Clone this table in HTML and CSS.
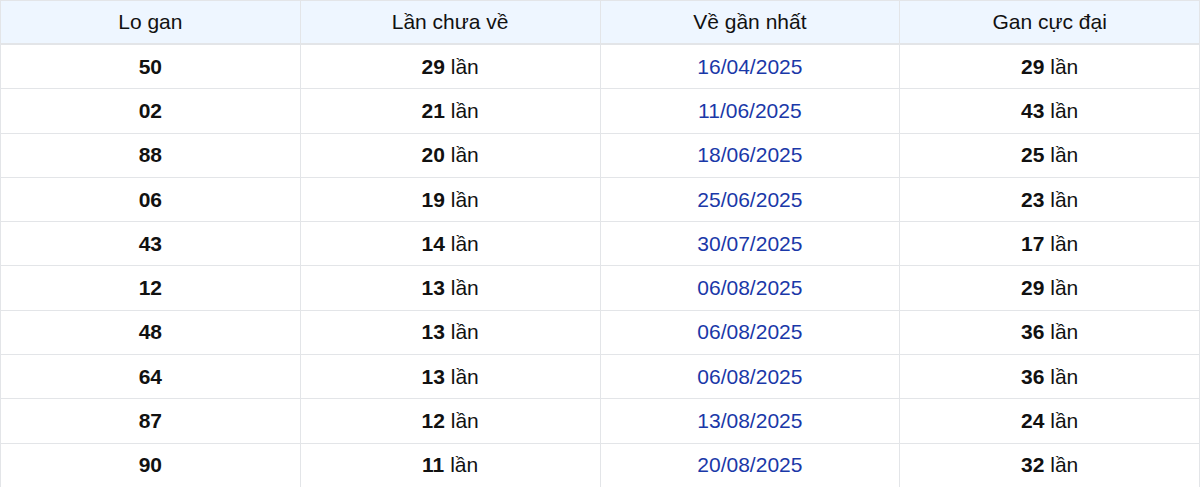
FILE: index.html
```html
<!DOCTYPE html>
<html lang="vi">
<head>
<meta charset="utf-8">
<link rel="stylesheet" href="styles.css">
</head>
<body>
<table class="gan">
  <thead>
    <tr><th>Lo gan</th><th>Lần chưa về</th><th>Về gần nhất</th><th>Gan cực đại</th></tr>
  </thead>
  <tbody>
    <tr><td><b>50</b></td><td><b>29</b> lần</td><td class="date">16/04/2025</td><td><b>29</b> lần</td></tr>
    <tr><td><b>02</b></td><td><b>21</b> lần</td><td class="date">11/06/2025</td><td><b>43</b> lần</td></tr>
    <tr><td><b>88</b></td><td><b>20</b> lần</td><td class="date">18/06/2025</td><td><b>25</b> lần</td></tr>
    <tr><td><b>06</b></td><td><b>19</b> lần</td><td class="date">25/06/2025</td><td><b>23</b> lần</td></tr>
    <tr><td><b>43</b></td><td><b>14</b> lần</td><td class="date">30/07/2025</td><td><b>17</b> lần</td></tr>
    <tr><td><b>12</b></td><td><b>13</b> lần</td><td class="date">06/08/2025</td><td><b>29</b> lần</td></tr>
    <tr><td><b>48</b></td><td><b>13</b> lần</td><td class="date">06/08/2025</td><td><b>36</b> lần</td></tr>
    <tr><td><b>64</b></td><td><b>13</b> lần</td><td class="date">06/08/2025</td><td><b>36</b> lần</td></tr>
    <tr><td><b>87</b></td><td><b>12</b> lần</td><td class="date">13/08/2025</td><td><b>24</b> lần</td></tr>
    <tr><td><b>90</b></td><td><b>11</b> lần</td><td class="date">20/08/2025</td><td><b>32</b> lần</td></tr>
  </tbody>
</table>
</body>
</html>
```
FILE: styles.css
```css
html, body {
  margin: 0;
  padding: 0;
  background: #fff;
}
body {
  font-family: "Liberation Sans", Arial, sans-serif;
  color: #111;
}
.gan {
  width: 1200px;
  border-collapse: collapse;
  table-layout: fixed;
  font-size: 21px;
}
.gan th, .gan td {
  border: 1px solid #e3e5e8;
  text-align: center;
  padding: 0;
  height: 43.3px;
  vertical-align: middle;
}
.gan th {
  background: #eef6ff;
  font-weight: 400;
  height: 42px;
  border-bottom: 2px solid #e3e5e8;
}
.gan b {
  font-weight: 700;
}
.gan td.date {
  color: #1a38a8;
}
```
